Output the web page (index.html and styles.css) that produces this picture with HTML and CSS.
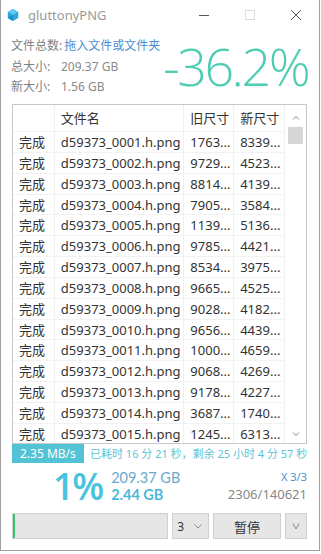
FILE: index.html
```html
<!DOCTYPE html>
<html lang="zh-CN">
<head>
    <meta charset="UTF-8">
    <meta name="viewport" content="width=device-width, initial-scale=1.0">
    <title>gluttonyPNG</title>
    <link rel="stylesheet" href="styles.css">
</head>
<body>
    <div class="window">
        <div class="titlebar">
            <svg class="logo" width="12" height="12" viewBox="0 0 12 12">
                <polygon points="6,0 11.2,3 11.2,9 6,12 0.8,9 0.8,3" fill="#2aa7d8"/>
                <polygon points="6,0 11.2,3 6,6 0.8,3" fill="#5fcbf0"/>
                <polygon points="0.8,9 6,6 6,12" fill="#1b8fc2"/>
            </svg>
            <span class="app-title">gluttonyPNG</span>
            <div class="win-btns">
                <span class="win-btn"><svg width="12" height="12" viewBox="0 0 12 12"><line x1="1" y1="6.5" x2="11" y2="6.5" stroke="#555" stroke-width="1"/></svg></span>
                <span class="win-btn"><svg width="12" height="12" viewBox="0 0 12 12"><rect x="1.5" y="1.5" width="9" height="9" fill="none" stroke="#ddd" stroke-width="1"/></svg></span>
                <span class="win-btn"><svg width="12" height="12" viewBox="0 0 12 12"><path d="M1 1 L11 11 M11 1 L1 11" stroke="#555" stroke-width="1"/></svg></span>
            </div>
        </div>

        <div class="summary">
            <div class="info">
                <div class="info-row"><span class="label">文件总数:</span> <span class="link">拖入文件或文件夹</span></div>
                <div class="info-row"><span class="label">总大小:</span><span class="val">209.37 GB</span></div>
                <div class="info-row"><span class="label">新大小:</span><span class="val">1.56 GB</span></div>
            </div>
            <div class="ratio">-36.2%</div>
        </div>

        <div class="list">
            <div class="list-body">
                <div class="row head">
                    <span class="c-st"></span>
                    <span class="c-name">文件名</span>
                    <span class="c-old">旧尺寸</span>
                    <span class="c-new">新尺寸</span>
                </div>
                <div id="rows"></div>
            </div>
            <div class="scrollbar">
                <svg class="arrow" width="10" height="10" viewBox="0 0 10 10"><path d="M2 6.5 L5 3.5 L8 6.5" fill="none" stroke="#888" stroke-width="1"/></svg>
                <div class="track"><div class="thumb"></div></div>
                <svg class="arrow" width="10" height="10" viewBox="0 0 10 10"><path d="M2 3.5 L5 6.5 L8 3.5" fill="none" stroke="#888" stroke-width="1"/></svg>
            </div>
        </div>

        <div class="status">
            <span class="speed">2.35 MB/s</span>
            <span class="elapsed">已耗时 16 分 21 秒，剩余 25 小时 4 分 57 秒</span>
        </div>

        <div class="progress-info">
            <div class="pct">1%</div>
            <div class="sizes">
                <div class="size-old">209.37 GB</div>
                <div class="size-new">2.44 GB</div>
            </div>
            <div class="counts">
                <div class="pass">X 3/3</div>
                <div class="done">2306/140621</div>
            </div>
        </div>

        <div class="controls">
            <div class="bar"><div class="bar-fill"></div></div>
            <div class="select">
                <span>3</span>
                <svg width="10" height="10" viewBox="0 0 10 10"><path d="M1.5 3.5 L5 7 L8.5 3.5" fill="none" stroke="#888" stroke-width="1"/></svg>
            </div>
            <button class="btn">暂停</button>
            <button class="btn small"><svg width="10" height="10" viewBox="0 0 10 10"><path d="M2 2.5 L5 8 L8 2.5" fill="none" stroke="#888" stroke-width="1"/></svg></button>
        </div>
    </div>
    <script>
        const data = [
            ["0001", "1763...", "8339..."], ["0002", "9729...", "4523..."], ["0003", "8814...", "4139..."],
            ["0004", "7905...", "3584..."], ["0005", "1139...", "5136..."], ["0006", "9785...", "4421..."],
            ["0007", "8534...", "3975..."], ["0008", "9665...", "4525..."], ["0009", "9028...", "4182..."],
            ["0010", "9656...", "4439..."], ["0011", "1000...", "4659..."], ["0012", "9068...", "4269..."],
            ["0013", "9178...", "4227..."], ["0014", "3687...", "1740..."], ["0015", "1245...", "6313..."]
        ];
        document.getElementById("rows").innerHTML = data.map(d =>
            `<div class="row"><span class="c-st">完成</span><span class="c-name">d59373_${d[0]}.h.png</span><span class="c-old">${d[1]}</span><span class="c-new">${d[2]}</span></div>`
        ).join('');
    </script>
</body>
</html>
```

FILE: styles.css
```css
* { box-sizing: border-box; }
body { margin: 0; background: #fff; font-family: "Noto Sans", "Noto Sans CJK SC", sans-serif; color: #333; }
.window { width: 320px; height: 551px; border: 1px solid #a0a0a0; border-top: none; background: #fff; }

.titlebar { height: 30px; display: flex; align-items: center; padding-left: 6px; }
.logo { margin-right: 9px; }
.app-title { font-size: 13px; color: #9a9a9a; flex: 1; }
.win-btns { display: flex; }
.win-btn { width: 46px; height: 30px; display: flex; align-items: center; justify-content: center; }

.summary { display: flex; padding: 6px 0 0 10px; height: 74px; }
.info { width: 150px; font-size: 12px; color: #808080; }
.info-row { height: 20.5px; line-height: 20.5px; white-space: nowrap; }
.label { display: inline-block; width: 50px; }
.link { color: #4a8fd0; }
.val { color: #8a8a8a; }
.ratio { font-family: "Open Sans", sans-serif; font-weight: 300; font-size: 52px; line-height: 52px; color: #4fcdb2; letter-spacing: -2.5px; margin-left: 2px; margin-top: 4px; }

.list { display: flex; margin: 0 12px 0 11px; height: 340px; border: 1px solid #c8c8c8; }
.list-body { flex: 1; overflow: hidden; }
.row { display: flex; height: 20.85px; line-height: 20.85px; font-size: 13px; color: #333; border-bottom: 1px solid #f2f2f2; white-space: nowrap; }
.row.head { height: 27px; line-height: 27px; color: #333; }
.row span { border-right: 1px solid #f0f0f0; padding-left: 6px; overflow: hidden; }
.c-st { width: 42px; }
.c-name { width: 130px; }
.c-old { width: 50px; }
.c-new { width: 51px; }
.scrollbar { width: 21px; display: flex; flex-direction: column; align-items: center; background: #fff; }
.scrollbar .arrow { margin: 8px 0 4px; }
.track { flex: 1; width: 100%; padding: 0 3px; }
.thumb { height: 17px; background: #d6d6d6; }

.status { display: flex; align-items: center; margin: 0 2px 0 11px; height: 19px; font-size: 11px; white-space: nowrap; }
.speed { background: #52c3d4; color: #fff; width: 72px; height: 19px; line-height: 19px; padding-left: 8px; font-size: 12px; }
.elapsed { color: #5cc4d6; padding-left: 6px; flex: 1; border-bottom: 1px solid transparent; }
.elapsed::after { content: ""; }

.progress-info { display: flex; align-items: center; height: 44px; padding: 2px 12px 0 52px; }
.pct { font-family: "Open Sans", sans-serif; font-weight: 600; font-size: 37px; line-height: 40px; color: #4cc3dd; letter-spacing: -2px; }
.sizes { margin-left: 9px; flex: 1; font-family: "Lato", sans-serif; font-size: 14.5px; line-height: 17px; color: #6aa9cf; }
.size-new { font-weight: bold; color: #4cb9dc; }
.counts { text-align: right; font-size: 13px; }
.pass { font-size: 11px; color: #4a8fd0; line-height: 16px; }
.done { color: #888; line-height: 18px; }

.controls { display: flex; gap: 4px; padding: 6px 12px 0 11px; height: 34px; }
.bar { width: 158px; height: 26px; background: #e6e6e6; border: 1px solid #cfcfcf; }
.bar-fill { width: 2px; height: 100%; background: #3bbf6b; }
.select { width: 37px; height: 26px; background: #e6e6e6; border: 1px solid #cfcfcf; display: flex; align-items: center; justify-content: space-between; padding: 0 5px 0 4px; font-size: 12px; }
.btn { height: 26px; background: #e6e6e6; border: 1px solid #cfcfcf; font-family: "Noto Sans CJK SC", sans-serif; font-size: 13px; color: #333; width: 69px; padding: 0; }
.btn.small { width: 22px; display: flex; align-items: center; justify-content: center; }
```
